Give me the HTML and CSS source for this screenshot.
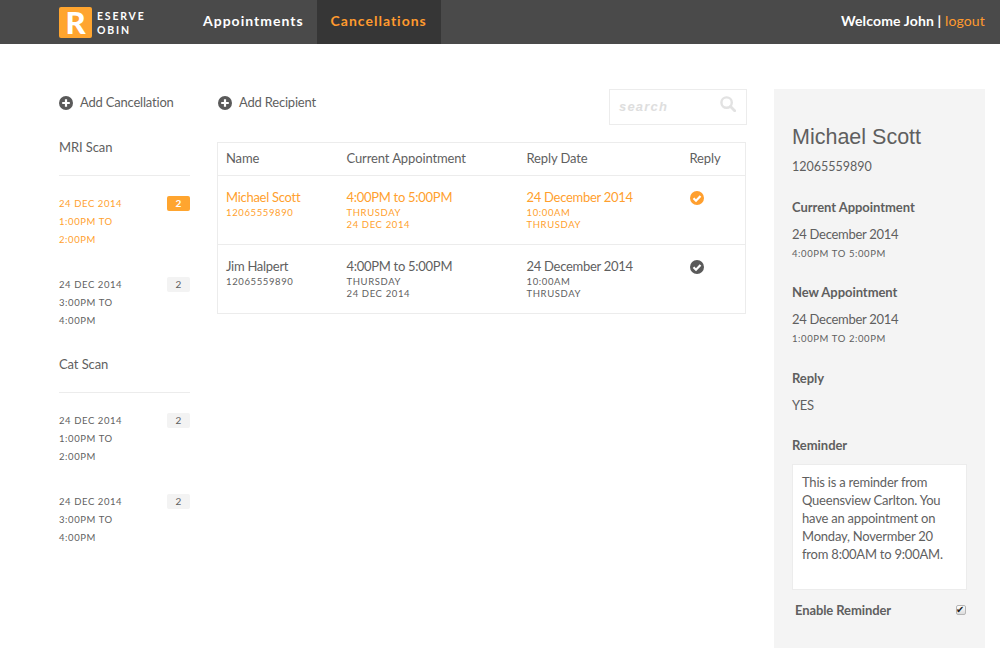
FILE: index.html
```html
<!DOCTYPE html>
<html lang="en">
<head>
  <meta charset="UTF-8">
  <title>Reserve Robin</title>
  <link rel="stylesheet" href="styles.css">
</head>
<body>
  <header class="topbar">
    <a class="logo">
      <span class="logo-mark">R</span>
      <span class="logo-text">ESERVE<br>OBIN</span>
    </a>
    <nav class="nav">
      <a class="nav-item">Appointments</a>
      <a class="nav-item active">Cancellations</a>
    </nav>
    <div class="welcome">Welcome John | <a class="logout">logout</a></div>
  </header>

  <main class="main">
    <aside class="sidebar">
      <a class="add-link">
        <svg class="add-icon" viewBox="0 0 14 14"><circle cx="7" cy="7" r="7" fill="#5a5a5a"/><path d="M7 3.2v7.6M3.2 7h7.6" stroke="#fff" stroke-width="2.2"/></svg>
        Add Cancellation
      </a>

      <h3 class="group-title first">MRI Scan</h3>
      <div class="slot selected">
        <div class="slot-time">24 DEC 2014<br>1:00PM TO<br>2:00PM</div>
        <span class="count">2</span>
      </div>
      <div class="slot">
        <div class="slot-time">24 DEC 2014<br>3:00PM TO<br>4:00PM</div>
        <span class="count">2</span>
      </div>

      <h3 class="group-title">Cat Scan</h3>
      <div class="slot">
        <div class="slot-time">24 DEC 2014<br>1:00PM TO<br>2:00PM</div>
        <span class="count">2</span>
      </div>
      <div class="slot">
        <div class="slot-time">24 DEC 2014<br>3:00PM TO<br>4:00PM</div>
        <span class="count">2</span>
      </div>
    </aside>

    <section class="content">
      <div class="toolbar">
        <a class="add-link">
          <svg class="add-icon" viewBox="0 0 14 14"><circle cx="7" cy="7" r="7" fill="#5a5a5a"/><path d="M7 3.2v7.6M3.2 7h7.6" stroke="#fff" stroke-width="2.2"/></svg>
          Add Recipient
        </a>
        <div class="search">
          <span>search</span>
          <svg class="search-icon" viewBox="0 0 16 16"><circle cx="6.6" cy="6.6" r="5.2" fill="none" stroke="#e2e2e2" stroke-width="2.4"/><path d="M10.5 10.5l4.2 4.2" stroke="#e2e2e2" stroke-width="2.8" stroke-linecap="round"/></svg>
        </div>
      </div>

      <table class="recipients">
        <thead>
          <tr>
            <th class="col-name">Name</th>
            <th class="col-appt">Current Appointment</th>
            <th class="col-date">Reply Date</th>
            <th>Reply</th>
          </tr>
        </thead>
        <tbody>
          <tr class="selected">
            <td>Michael Scott<small>12065559890</small></td>
            <td>4:00PM to 5:00PM<small>THRUSDAY<br>24 DEC 2014</small></td>
            <td>24 December 2014<small>10:00AM<br>THRUSDAY</small></td>
            <td>
              <svg class="check" viewBox="0 0 14 14"><circle cx="7" cy="7" r="7" fill="#ff9f2e"/><path d="M3.5 7.2l2.5 2.5 4.5-4.7" fill="none" stroke="#fff" stroke-width="2.2"/></svg>
            </td>
          </tr>
          <tr>
            <td>Jim Halpert<small>12065559890</small></td>
            <td>4:00PM to 5:00PM<small>THURSDAY<br>24 DEC 2014</small></td>
            <td>24 December 2014<small>10:00AM<br>THRUSDAY</small></td>
            <td>
              <svg class="check" viewBox="0 0 14 14"><circle cx="7" cy="7" r="7" fill="#5a5a5a"/><path d="M3.5 7.2l2.5 2.5 4.5-4.7" fill="none" stroke="#fff" stroke-width="2.2"/></svg>
            </td>
          </tr>
        </tbody>
      </table>
    </section>

    <aside class="detail">
      <h2 class="detail-name">Michael Scott</h2>
      <p class="detail-phone">12065559890</p>

      <h4 class="detail-label">Current Appointment</h4>
      <p class="detail-value">24 December 2014</p>
      <p class="detail-small">4:00PM TO 5:00PM</p>

      <h4 class="detail-label">New Appointment</h4>
      <p class="detail-value">24 December 2014</p>
      <p class="detail-small">1:00PM TO 2:00PM</p>

      <h4 class="detail-label">Reply</h4>
      <p class="detail-value">YES</p>

      <h4 class="detail-label">Reminder</h4>
      <div class="reminder">This is a reminder from Queensview Carlton. You have an appointment on Monday, Novermber 20 from 8:00AM to 9:00AM.</div>

      <label class="enable">
        Enable Reminder
        <input class="enable-box" type="checkbox" checked>
      </label>
    </aside>
  </main>
</body>
</html>
```

FILE: styles.css
```css
* { box-sizing: border-box; }
html, body { height: 100%; }
body {
  margin: 0;
  overflow: hidden;
  background: #fff;
  color: #5f5f5f;
  font-family: Lato, "Noto Sans", sans-serif;
  font-size: 13px;
}
h2, h3, h4, p { margin: 0; font-weight: normal; }

.topbar {
  display: flex;
  align-items: stretch;
  height: 44px;
  padding: 0 15px 0 59px;
  background: #4a4a4a;
  color: #fff;
}
.logo { display: flex; align-items: flex-start; width: 127px; padding-top: 7px; }
.logo-mark {
  width: 33px;
  height: 31px;
  border-radius: 2px;
  background: #ffa52f;
  color: #fff;
  font-size: 31px;
  font-weight: 900;
  line-height: 31px;
  text-align: center;
}
.logo-text {
  margin: 2px 0 0 5px;
  font-size: 10.5px;
  font-weight: 700;
  line-height: 14px;
  letter-spacing: 1.8px;
}
.nav { display: flex; }
.nav-item {
  display: flex;
  align-items: center;
  padding: 0 13px 3px 17px;
  font-size: 14px;
  font-weight: 700;
  letter-spacing: 1px;
}
.nav-item.active { padding: 0 14px 3px; background: #363636; color: #ff9a2e; }
.welcome { margin-left: auto; font-size: 14px; font-weight: 700; line-height: 42px; letter-spacing: .15px; }
.logout { color: #ff9a2e; font-weight: 400; }

.main {
  display: flex;
  align-items: flex-start;
  height: calc(100vh - 44px);
  padding: 45px 15px 0 59px;
}

.add-link { display: flex; align-items: center; gap: 7px; font-size: 13px; line-height: 17px; letter-spacing: -.2px; }
.add-icon { width: 14px; height: 14px; flex: none; }

.sidebar { width: 131px; margin-right: 27px; padding-top: 5px; }
.group-title { margin-bottom: 18px; padding-bottom: 19px; border-bottom: 1px solid #ececec; font-size: 13px; line-height: 17px; letter-spacing: -.1px; }
.group-title.first { margin-top: 28px; }
.slot {
  display: flex;
  justify-content: space-between;
  align-items: flex-start;
  height: 81px;
}
.slot-time { padding-top: 1px; font-size: 9.5px; line-height: 18px; letter-spacing: .58px; }
.count {
  width: 23px;
  height: 15px;
  margin-top: 2px;
  border-radius: 2px;
  background: #f3f3f3;
  font-size: 10px;
  line-height: 15px;
  text-align: center;
}
.slot.selected .slot-time { color: #ff9f2e; }
.slot.selected .count { background: #ffa52f; color: #fff; font-weight: 700; }

.content { width: 529px; margin-right: 28px; }
.toolbar { display: flex; justify-content: space-between; align-items: flex-start; height: 53px; }
.toolbar .add-link { margin-top: 5px; padding-left: 1px; }
.search {
  display: flex;
  justify-content: space-between;
  align-items: center;
  width: 138px;
  height: 36px;
  margin-right: -1px;
  padding: 0 10px 2px 9px;
  border: 1px solid #ececec;
  color: #dedede;
  font-family: "Liberation Sans", Arial, sans-serif;
  font-size: 13px;
  font-style: italic;
  font-weight: 700;
  letter-spacing: 1.2px;
}
.search-icon { width: 16px; height: 16px; margin-top: -4px; }

.recipients { width: 529px; border: 1px solid #ececec; border-collapse: collapse; table-layout: fixed; }
.recipients th {
  height: 33px;
  padding: 0 0 2px 8px;
  font-size: 13px;
  font-weight: 400;
  letter-spacing: -.12px;
  text-align: left;
}
.col-name { width: 121px; }
.col-appt { width: 180px; }
.col-date { width: 163px; }
.recipients td {
  height: 69px;
  padding: 13px 0 0 8px;
  border-top: 1px solid #ececec;
  font-size: 13px;
  line-height: 17px;
  letter-spacing: -.28px;
  vertical-align: top;
}
.recipients small {
  display: block;
  margin-bottom: -1px;
  padding-top: 1px;
  font-size: 9.5px;
  line-height: 12px;
  letter-spacing: .62px;
}
.recipients tr.selected td { color: #ff9f2e; }
.check { display: block; width: 14px; height: 14px; margin-top: 2px; }

.detail {
  width: 211px;
  height: 100%;
  padding: 36px 18px 0;
  background: #f4f4f4;
}
.detail-name { font-family: "Liberation Sans", Arial, sans-serif; font-size: 21.5px; line-height: 24px; color: #5f5f5f; }
.detail-phone { margin: 10px 0 -1px; font-size: 12.5px; line-height: 16px; }
.detail-label { margin-top: 24.5px; font-size: 13px; font-weight: 700; line-height: 16px; letter-spacing: -.05px; }
.detail-value { margin-top: 11px; font-size: 13px; line-height: 16px; letter-spacing: -.28px; }
.detail-small { margin: 5px 0 -1px; font-size: 9.5px; line-height: 14px; letter-spacing: .6px; }
.reminder {
  height: 126px;
  margin-top: 11px;
  padding: 8px 9px 0;
  border: 1px solid #ececec;
  background: #fff;
  font-size: 13px;
  line-height: 18px;
  letter-spacing: -.22px;
}
.enable {
  display: flex;
  justify-content: space-between;
  align-items: center;
  margin-top: 12px;
  padding: 0 1px 0 3px;
  font-size: 13px;
  font-weight: 700;
  line-height: 17px;
  letter-spacing: -.1px;
}
.enable-box {
  appearance: none;
  position: relative;
  width: 10px;
  height: 10px;
  margin: 0 0 2px;
  border: 1px solid #b5b5b5;
  border-radius: 2px;
  background: linear-gradient(#fff, #dcdcdc);
}
.enable-box:checked::after {
  content: "✔";
  position: absolute;
  top: -1px;
  left: -1px;
  color: #222;
  font-family: "DejaVu Sans", sans-serif;
  font-size: 10px;
  line-height: 10px;
}
```
